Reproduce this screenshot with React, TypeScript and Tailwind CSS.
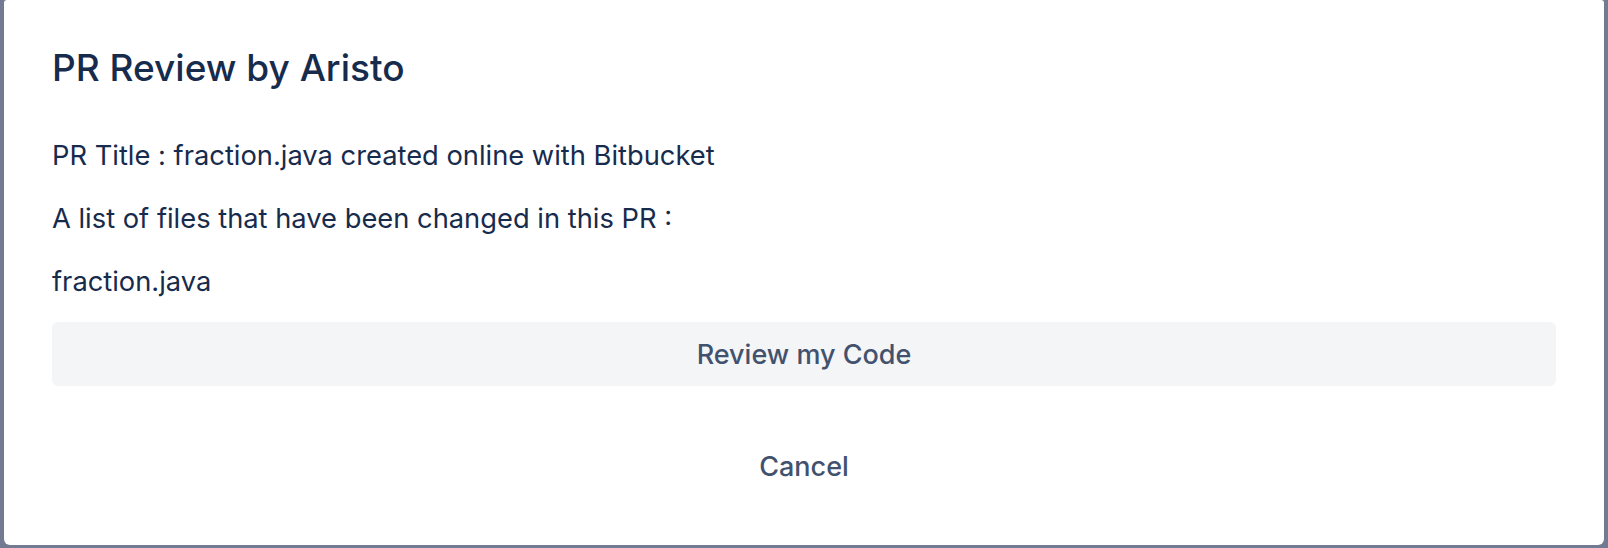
export default function App() {
  return (
    <div className="h-[548px] w-full overflow-hidden bg-[#737b92] px-1 pb-[3px] font-['Inter','Noto_Sans',sans-serif]">
      <div className="flex h-full flex-col rounded-t-[3px] rounded-b-[6px] bg-white px-12">
        <h1 className="mt-[46px] text-[37px] leading-[44px] font-medium text-[#172b4d]">PR Review by Aristo</h1>
        <div className="mt-[48px] flex flex-col gap-[27px] text-[27.3px] leading-[36px] text-[#172b4d]">
          <p>PR Title : fraction.java created online with Bitbucket</p>
          <p>A list of files that have been changed in this PR :</p>
          <p>fraction.java</p>
        </div>
        <button className="mt-[22px] h-16 w-full rounded-[6px] bg-[#f4f5f7] pt-[2px] text-[27px] font-medium text-[#42526e]">
          Review my Code
        </button>
        <button className="mt-[48px] h-16 w-full rounded-[6px] pt-[2px] text-[27px] font-medium text-[#42526e]">Cancel</button>
      </div>
    </div>
  );
}
